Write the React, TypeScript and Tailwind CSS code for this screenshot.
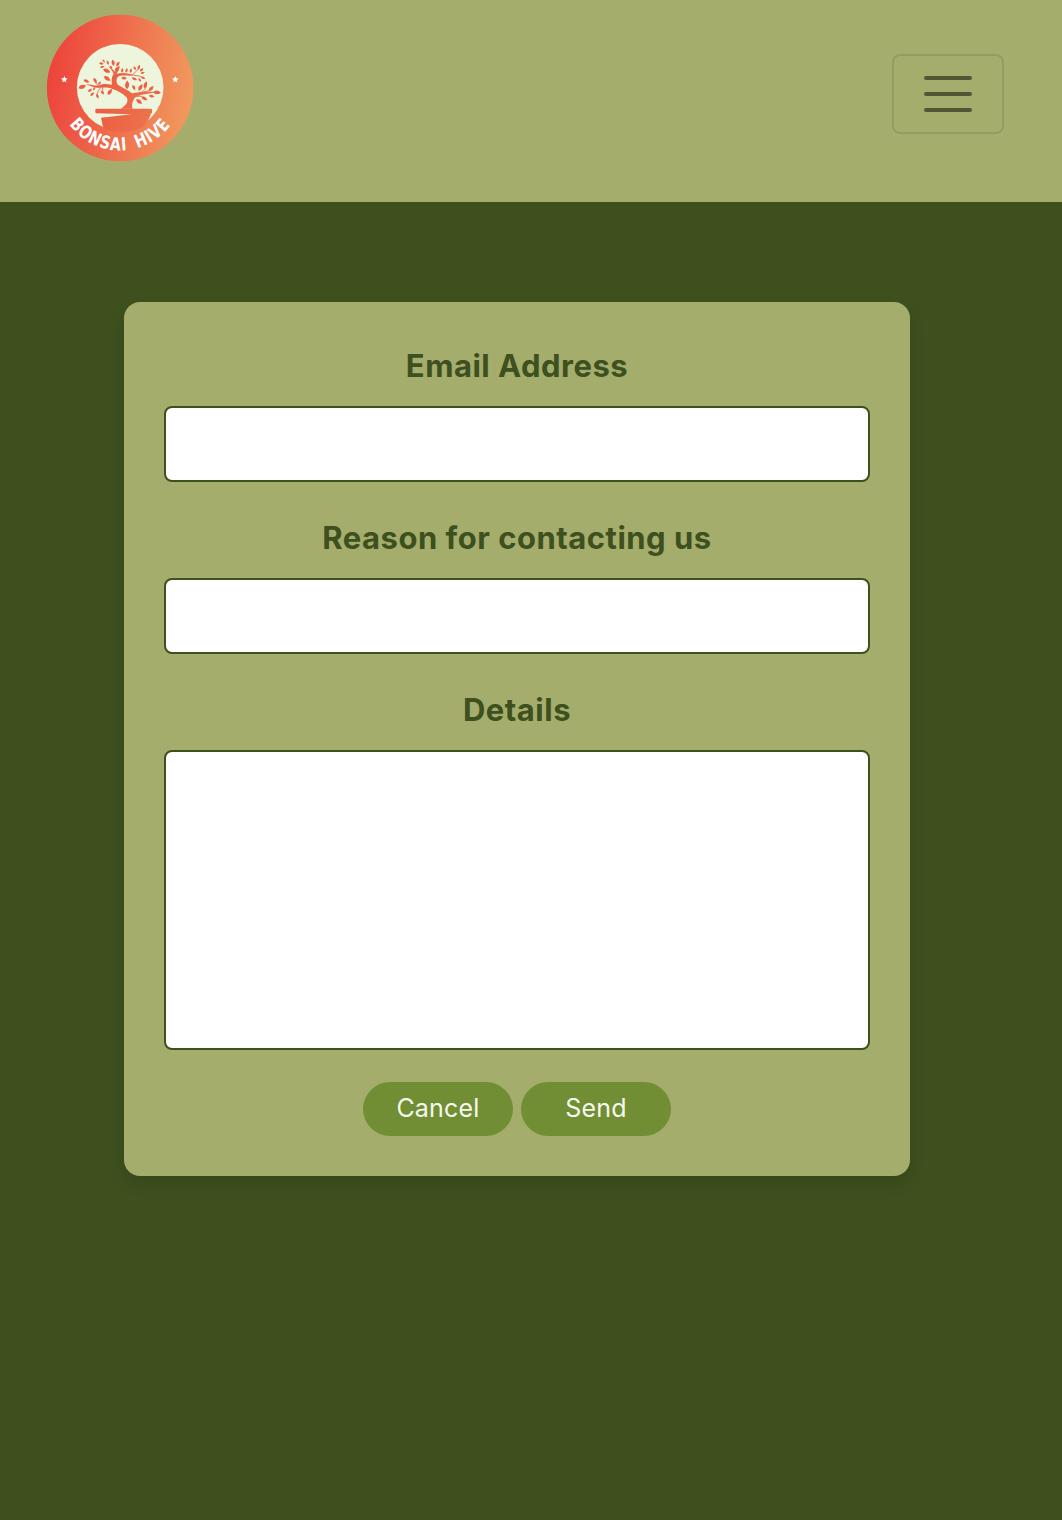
const leaves: [number, number, number, number][] = [
  // x, y, length, angle
  [127, 237, 24, -12], [139, 220, 19, 30], [165, 218, 18, 65], [150, 247, 15, -30],
  [157, 259, 15, -35], [172, 265, 15, 75], [187, 254, 14, 60], [210, 252, 22, -50],
  [163, 242, 12, -55], [178, 226, 13, 130], [201, 212, 23, 42], [184, 167, 14, 15],
  [191, 159, 11, 60], [203, 164, 14, 80], [219, 165, 19, 85], [234, 168, 17, -50],
  [187, 177, 14, -5], [200, 189, 23, 30], [232, 183, 22, -45], [213, 178, 12, 60],
  [247, 187, 14, -70], [260, 187, 14, -70], [273, 188, 14, -75], [284, 181, 13, 70],
  [297, 178, 15, -65], [305, 186, 14, -35], [308, 195, 13, -10], [309, 210, 14, 30],
  [299, 216, 13, 60], [283, 213, 17, 30], [252, 211, 16, 10], [262, 231, 26, -80],
  [281, 239, 17, 70], [302, 239, 23, -55], [317, 231, 22, -65], [334, 242, 20, -40],
  [351, 254, 23, 8], [335, 265, 17, 20], [313, 272, 20, 35], [297, 281, 22, 42],
];

function Logo() {
  return (
    <svg viewBox="0 0 480 480" className="block size-40" role="img" aria-label="Bonsai Hive">
      <defs>
        <linearGradient id="ring" gradientUnits="userSpaceOnUse" x1="22" y1="208" x2="459" y2="272">
          <stop offset="0" stopColor="#ed433c" />
          <stop offset="1" stopColor="#f09a5e" />
        </linearGradient>
        <linearGradient id="bark" gradientUnits="userSpaceOnUse" x1="110" y1="220" x2="370" y2="260">
          <stop offset="0" stopColor="#eb5540" />
          <stop offset="1" stopColor="#ed754d" />
        </linearGradient>
        <path id="motto" d="M64.900 308A188 188 0 0 0 415.100 308" />
      </defs>
      <circle cx="240.500" cy="240" r="220" fill="url(#ring)" />
      <circle cx="240.500" cy="238" r="130" fill="#eef5dd" />
      <g fill="url(#bark)">
        <path d="M169 302H333Q336 302 336 305V316H333L327 332L315 348Q300 370 240 372Q205 371 189 358L183 329L275 319L169 316Q166 316 166 312V306Q166 302 169 302Z" />
        <path d="M243 302C258 292 267 282 260 268C247 255 231 247 216 242C198 236 186 240 171 239C155 237 147 232 137 229C155 229 160 234 174 233C190 225 202 228 216 230C214 217 214 206 221 198C217 187 211 180 203 173C214 178 219 186 226 192C232 188 235 180 238 171C239 184 234 192 229 197C254 191 268 198 287 201C268 206 246 199 234 206C227 214 229 225 236 232C249 241 265 246 276 256C298 252 319 248 350 252C326 258 300 259 286 268C277 278 274 292 278 302Z" />
      </g>
      <g fill="#ec6145">
        {leaves.map(([x, y, length, angle], i) => (
          <path
            key={i}
            d="M-10 1Q-4 -10 10 -2Q1 9 -10 1Z"
            transform={`translate(${x} ${y}) rotate(${angle}) scale(${length / 20})`}
          />
        ))}
      </g>
      <g fill="none" stroke="#ec6145" strokeWidth="2.500">
        <path d="M185 235Q172 248 170 264M188 236Q187 247 190 258M174 234Q165 225 164 214M275 202Q291 190 299 177M282 202Q298 202 309 209M302 255Q318 246 319 230M310 253Q327 250 335 240M289 266Q306 261 316 273" />
      </g>
      <g fill="#fff">
        <path d="M73 204l3 6.500 7 .8-5.200 4.800 1.400 7-6.200-3.500-6.200 3.500 1.400-7-5.200-4.800 7-.8z" />
        <path d="M406 204l3 6.500 7 .8-5.200 4.800 1.400 7-6.200-3.500-6.200 3.500 1.400-7-5.200-4.800 7-.8z" />
        <text
          fontFamily="'DejaVu Sans Condensed', 'Liberation Sans', sans-serif"
          fontSize="54"
          fontWeight="700"
          textAnchor="middle"
          letterSpacing="3"
          wordSpacing="14"
        >
          <textPath href="#motto" startOffset="50%" textLength="356" lengthAdjust="spacingAndGlyphs">BONSAI HIVE</textPath>
        </text>
      </g>
    </svg>
  );
}

const labelClass = "flex h-12 items-center justify-center whitespace-nowrap text-[31px] font-bold";
const fieldClass = "mt-4 block w-full resize-none rounded-lg border-2 border-[#3d501d] bg-white p-3 text-2xl outline-none";
const buttonClass = "flex h-[54px] w-[150px] items-center justify-center rounded-full bg-[#718e35] text-[25px] tracking-[0.2px] text-[#f5f8ec]";

export default function App() {
  return (
    <div className="min-h-[1520px] bg-[#3d501d] font-['Inter',sans-serif] text-[#3d501d]">
      <header className="flex h-[202px] items-start justify-between bg-[#a4ad6c] pt-2 pr-[58px] pl-10">
        <Logo />
        <button
          aria-label="Menu"
          className="mt-[46px] flex h-20 w-28 flex-col items-center justify-center gap-3 rounded-lg border-2 border-[#949c61]"
        >
          <span className="h-1 w-12 rounded-full bg-[#525634]" />
          <span className="h-1 w-12 rounded-full bg-[#525634]" />
          <span className="h-1 w-12 rounded-full bg-[#525634]" />
        </button>
      </header>
      <main className="pt-[100px] pl-[124px]">
        <form className="h-[874px] w-[786px] rounded-2xl bg-[#a4ad6c] px-10 pt-10 shadow-[0_8px_16px_rgba(0,0,0,0.1)]">
          <label htmlFor="email" className={labelClass}><span className="tracking-[0.5px]">Email Address</span></label>
          <input id="email" type="email" className={`${fieldClass} h-[76px]`} />
          <label htmlFor="reason" className={`${labelClass} mt-8`}><span className="tracking-[0.5px]">Reason for contacting us</span></label>
          <input id="reason" className={`${fieldClass} h-[76px]`} />
          <label htmlFor="details" className={`${labelClass} mt-8`}><span className="tracking-[0.5px]">Details</span></label>
          <textarea id="details" className={`${fieldClass} h-[300px]`} />
          <div className="mt-8 flex justify-center gap-2">
            <button type="button" className={buttonClass}>Cancel</button>
            <button type="button" className={buttonClass}>Send</button>
          </div>
        </form>
      </main>
    </div>
  );
}
